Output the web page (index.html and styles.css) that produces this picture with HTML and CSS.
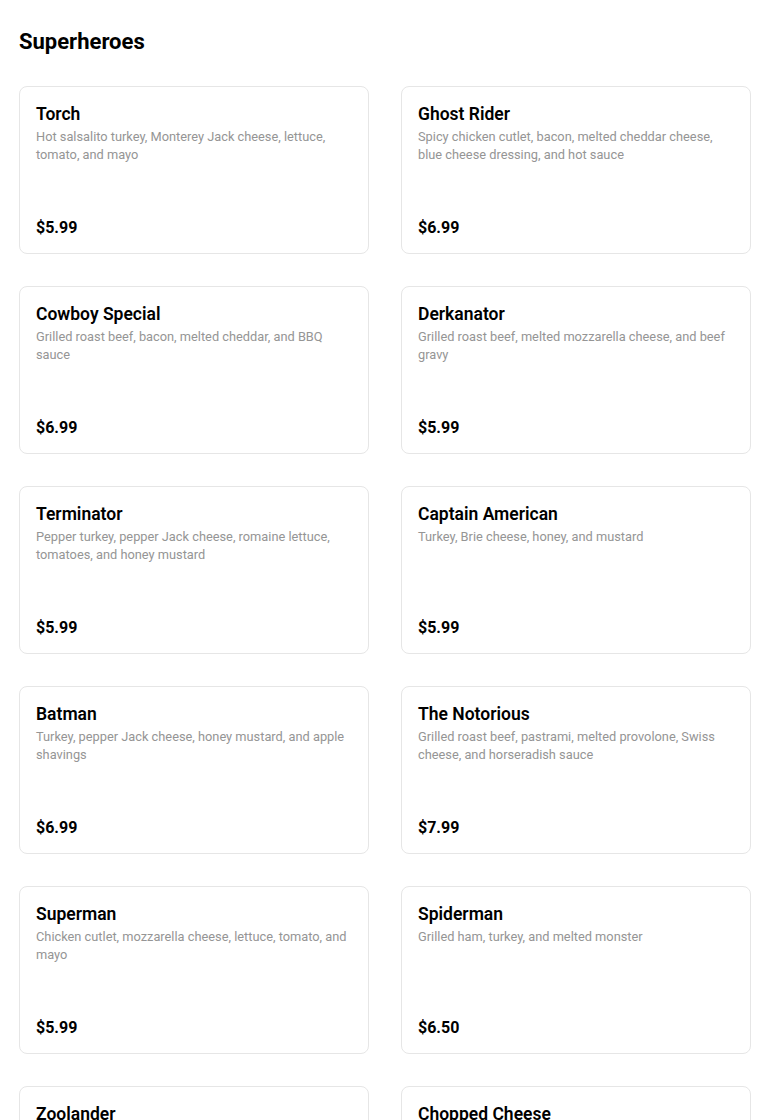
FILE: index.html
```html
<!DOCTYPE html>
<html>
<head>
<meta charset="utf-8">
<link rel="stylesheet" href="styles.css">
</head>
<body>
<main class="menu">
  <h1 class="section-title">Superheroes</h1>
  <div class="grid">
    <div class="card"><div class="name">Torch</div><div class="desc">Hot salsalito turkey, Monterey Jack cheese, lettuce, tomato, and mayo</div><div class="price">$5.99</div></div>
    <div class="card"><div class="name">Ghost Rider</div><div class="desc">Spicy chicken cutlet, bacon, melted cheddar cheese, blue cheese dressing, and hot sauce</div><div class="price">$6.99</div></div>
    <div class="card"><div class="name">Cowboy Special</div><div class="desc">Grilled roast beef, bacon, melted cheddar, and BBQ sauce</div><div class="price">$6.99</div></div>
    <div class="card"><div class="name">Derkanator</div><div class="desc">Grilled roast beef, melted mozzarella cheese, and beef gravy</div><div class="price">$5.99</div></div>
    <div class="card"><div class="name">Terminator</div><div class="desc">Pepper turkey, pepper Jack cheese, romaine lettuce, tomatoes, and honey mustard</div><div class="price">$5.99</div></div>
    <div class="card"><div class="name">Captain American</div><div class="desc">Turkey, Brie cheese, honey, and mustard</div><div class="price">$5.99</div></div>
    <div class="card"><div class="name">Batman</div><div class="desc">Turkey, pepper Jack cheese, honey mustard, and apple shavings</div><div class="price">$6.99</div></div>
    <div class="card"><div class="name">The Notorious</div><div class="desc">Grilled roast beef, pastrami, melted provolone, Swiss cheese, and horseradish sauce</div><div class="price">$7.99</div></div>
    <div class="card"><div class="name">Superman</div><div class="desc">Chicken cutlet, mozzarella cheese, lettuce, tomato, and mayo</div><div class="price">$5.99</div></div>
    <div class="card"><div class="name">Spiderman</div><div class="desc">Grilled ham, turkey, and melted monster</div><div class="price">$6.50</div></div>
    <div class="card"><div class="name">Zoolander</div><div class="desc">Grilled chicken, bacon, melted Swiss cheese, and ranch</div><div class="price">$6.99</div></div>
    <div class="card"><div class="name">Chopped Cheese</div><div class="desc">Chopped beef, melted American cheese, onions, lettuce, and tomato</div><div class="price">$6.50</div></div>
  </div>
</main>
</body>
</html>
```

FILE: styles.css
```css
* { box-sizing: border-box; }
html, body { margin: 0; padding: 0; background: #fff; }
body {
  font-family: Roboto, "Liberation Sans", sans-serif;
  color: #000;
}
.menu {
  padding: 27px 19px 40px;
}
.section-title {
  margin: 0 0 29px;
  font-size: 22px;
  line-height: 30px;
  font-weight: 700;
}
.grid {
  display: grid;
  grid-template-columns: 1fr 1fr;
  column-gap: 32px;
  row-gap: 32px;
}
.card {
  height: 168px;
  border: 1px solid #e6e6e6;
  border-radius: 8px;
  padding: 17px 16px 15px 16px;
  display: flex;
  flex-direction: column;
}
.name {
  font-size: 17.5px;
  line-height: 20px;
  font-weight: 600;
  margin: 0 0 4px;
}
.desc {
  font-size: 12.8px;
  line-height: 18px;
  color: #959595;
}
.price {
  margin-top: auto;
  font-size: 16px;
  line-height: 20px;
  font-weight: 700;
}
```
